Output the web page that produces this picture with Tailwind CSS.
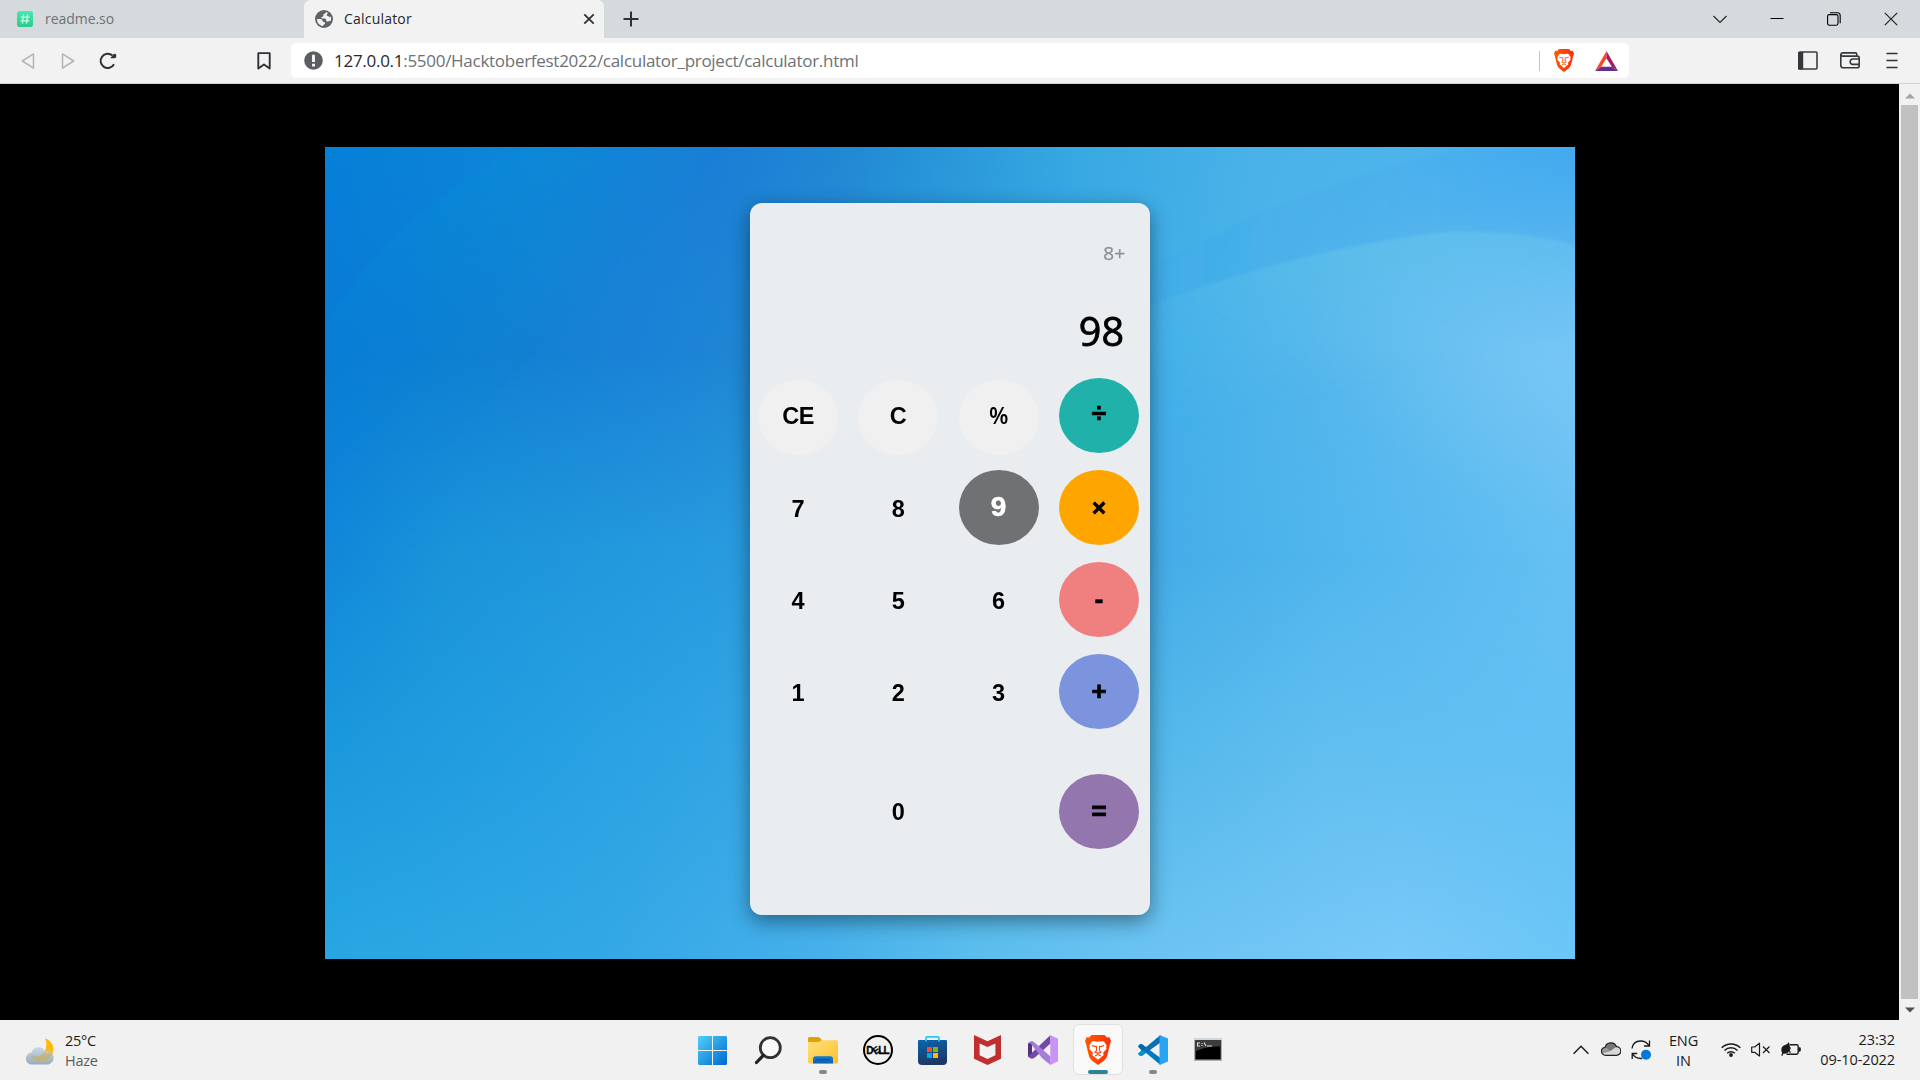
<!DOCTYPE html>
<html lang="en">
<head>
<meta charset="utf-8">
<title>Calculator</title>
<script src="https://cdn.jsdelivr.net/npm/@tailwindcss/browser@4"></script>
</head>
<body class="w-[1920px] h-[1080px] overflow-hidden flex flex-col bg-black font-['Open_Sans','Noto_Sans',sans-serif]">

<!-- Tab strip -->
<header class="h-[38px] shrink-0 bg-[#d5dadd] flex text-[14px]">
  <div class="w-[304px] flex items-center pl-[17px]">
    <svg class="w-4 h-4" viewBox="0 0 16 16"><defs><linearGradient id="rd" x2="0" y2="1"><stop stop-color="#48e8b0"/><stop offset="1" stop-color="#2fc98d"/></linearGradient></defs><rect width="16" height="16" rx="2.5" fill="url(#rd)"/><path d="M6.6 3.4 5.4 12.6M10.6 3.4 9.4 12.6M3.8 6.2h8.8M3.4 9.8h8.8" stroke="#b8ffe6" stroke-width="1.3" fill="none"/></svg>
    <span class="ml-3 pb-0.5 text-[#6e7173] tracking-[-0.05px]">readme.so</span>
  </div>
  <div class="w-[300px] rounded-t-[6px] bg-[#f2f2f2] flex items-center pl-[11px] pr-[9px]">
    <svg class="w-[18px] h-[18px]" viewBox="0 0 18 18"><circle cx="9" cy="9" r="9" fill="#5f6368"/><path d="M11 1.800c-.2 1.500-1.300 1.700-2.100 2.300-.9.800 0 1.700-.9 2.300-.8.500-1.700.2-1.700 1.200 0 1 1.200 1 2.600 1 1.600 0 2.200.5 2.300 1.800.1 1.400 1.300 1.200 2.100.9 1.100-.4 2 .200 2.600-.8.400-1.300.3-2.600-.1-3.900-.9.600-1.900.3-2.400-.4-.5-.6-1.700-.2-1.800-1 0-.9 1.200-1.300 1.100-2.300zM1.900 9c0 3.500 2.600 6.700 6 7.100.6-1.400.8-1.500 1.900-2.200.8-.7-.1-1.600-.9-1.800-1-.2-1.300-.5-1.500-1.500C7.200 9.300 5.500 9.200 4.600 9.100 3.600 9 2.700 9.300 1.900 9z" fill="#f2f2f2"/></svg>
    <span class="ml-[11px] pb-0.5 text-[#25282b] tracking-[0.2px] flex-1">Calculator</span>
    <svg class="w-3 h-3" viewBox="0 0 12 12"><path d="M1.300 1.300 10.700 10.700M10.700 1.300 1.300 10.700" stroke="#2e3135" stroke-width="1.800"/></svg>
  </div>
  <div class="flex-1 flex items-center pl-[19px]">
    <svg class="w-4 h-4" viewBox="0 0 16 16"><path d="M8 .5v15M.5 8h15" stroke="#2e3135" stroke-width="2"/></svg>
  </div>
  <div class="w-[230px] flex items-center justify-between pl-[23px] pr-[22px]">
    <svg class="w-[14px] h-[14px]" viewBox="0 0 14 14"><path d="M.5 4 7 10.500 13.500 4" fill="none" stroke="#222" stroke-width="1.100"/></svg>
    <svg class="w-[14px] h-[14px]" viewBox="0 0 14 14"><path d="M.5 6.500h13" stroke="#000" stroke-width="1"/></svg>
    <svg class="w-[14px] h-[14px]" viewBox="0 0 14 14" fill="none" stroke="#000" stroke-width="1.100"><rect x=".6" y="2.600" width="10.400" height="10.600" rx="1.600"/><path d="M3 .7h7.500c1.800 0 2.700 1.200 2.700 3v7.500"/></svg>
    <svg class="w-[14px] h-[14px]" viewBox="0 0 14 14"><path d="M.8.800 13.200 13.200M13.200.8.800 13.200" stroke="#222" stroke-width="1.200"/></svg>
  </div>
</header>

<!-- Address toolbar -->
<nav class="h-[46px] shrink-0 bg-[#f2f2f2] border-b border-[#d2d2d2] flex items-center">
  <div class="w-[291px] flex items-center pl-[21px] pr-5">
    <svg class="w-[14px] h-[18px]" viewBox="0 0 14 18"><path d="M12.500 1.800v14.400L1.300 9z" fill="none" stroke="#b4b5b6" stroke-width="1.500" stroke-linejoin="round"/></svg>
    <svg class="w-[14px] h-[18px] ml-[26px]" viewBox="0 0 14 18"><path d="M1.500 1.800v14.400L12.700 9z" fill="none" stroke="#b4b5b6" stroke-width="1.500" stroke-linejoin="round"/></svg>
    <svg class="w-[18px] h-[18px] ml-6" viewBox="0 0 18 18"><path d="M15 12.200A7.100 7.100 0 1 1 13.500 3.600" fill="none" stroke="#2e3135" stroke-width="2"/><path d="M11.200 6.300h4.300c1.100 0 1.700-.6 1.700-1.700V3.200c0-1.300-1.400-2-2.400-1.200z" fill="#2e3135"/></svg>
    <div class="flex-1"></div>
    <svg class="w-[14px] h-[18px]" viewBox="0 0 14 18"><path d="M1.300 1.100h11.400v15.500L7 12.400l-5.700 4.200z" fill="none" stroke="#2e3135" stroke-width="1.900" stroke-linejoin="round"/></svg>
  </div>
  <div class="w-[1338px] h-[35px] rounded-[5px] bg-white flex items-center pl-[13px] pr-[11px]">
    <svg class="w-[19px] h-[19px]" viewBox="0 0 19 19"><circle cx="9.500" cy="9.500" r="9.300" fill="#5a5e63"/><path d="M8.100 3.700h2.800v7.200H8.100zM8.100 12.700h2.800v2.700H8.100z" fill="#fff"/></svg>
    <div class="ml-[11px] text-[17px] tracking-[-0.28px] text-[#6d7175] whitespace-nowrap flex-1"><span class="text-[#26292c]">127.0.0.1</span>:5500/Hacktoberfest2022/calculator_project/calculator.html</div>
    <div class="w-px h-5 bg-[#c2c4c6]"></div>
    <svg class="w-5 h-[23px] ml-[14px]" viewBox="0 0 26 30"><use href="#lion"/></svg>
    <svg class="w-[23px] h-5 ml-[21px]" viewBox="0 0 23 20"><path d="M11.500 0 0 20l6.200-4.200 5.300-8.600z" fill="#ff4724"/><path d="M11.500 0 23 20l-6.200-4.200-5.300-8.600z" fill="#9e1f63"/><path d="M0 20h23l-6.200-4.200H6.200z" fill="#662d91"/></svg>
  </div>
  <div class="flex-1 flex items-center pl-[169px]">
    <svg class="w-5 h-[19px]" viewBox="0 0 20 19"><rect x="1" y="1" width="18" height="17" rx="1" fill="none" stroke="#3b3e43" stroke-width="1.600"/><path d="M0 1h5.200v17.500H0z" fill="#34373c"/></svg>
    <svg class="w-5 h-[17px] ml-[22px]" viewBox="0 0 20 17"><path d="M2.500 4.100h14.700a2 2 0 0 1 2 2v7.700a2 2 0 0 1-2 2H3a2.200 2.200 0 0 1-2.200-2.200V2.800C.8 1.600 1.700.9 2.800.9h12.400c1 0 1.600.7 1.600 1.600v1.600M1 2.500c0 1 .7 1.600 1.500 1.600M19.200 7h-6.300a2.700 2.700 0 0 0 0 5.400h6.300" fill="none" stroke="#34373c" stroke-width="1.600"/></svg>
    <svg class="w-3 h-[17px] ml-[26px]" viewBox="0 0 12 17"><path d="M.5 1.500h11M.5 8.500h11M.5 15.500h11" stroke="#2e3135" stroke-width="1.700"/></svg>
  </div>
</nav>

<!-- Page viewport -->
<div class="h-[936px] shrink-0 flex">
  <main class="w-[1899px] bg-black pt-[63px] pl-[325px]">
    <div class="relative w-[1250px] h-[812px] overflow-hidden pt-[56px] pl-[425px]">
      <!-- Wallpaper: five horizontal colour bands that fade into each other -->
      <svg class="absolute inset-0 w-[1250px] h-[812px]" viewBox="0 0 1250 812">
        <defs>
          <linearGradient id="g0"><stop stop-color="#0680d9"/><stop offset=".17" stop-color="#0f86d8"/><stop offset=".31" stop-color="#1a7ed6"/><stop offset=".42" stop-color="#2289d4"/><stop offset=".5" stop-color="#2a98da"/><stop offset=".6" stop-color="#38a9e2"/><stop offset=".75" stop-color="#4ab2e9"/><stop offset=".87" stop-color="#4db4ec"/><stop offset="1" stop-color="#46aef0"/></linearGradient>
          <linearGradient id="g1"><stop stop-color="#0a7ad5"/><stop offset=".13" stop-color="#1180d2"/><stop offset=".26" stop-color="#1b82d6"/><stop offset=".34" stop-color="#2087d4"/><stop offset=".5" stop-color="#2d9bdc"/><stop offset=".68" stop-color="#43b0e9"/><stop offset=".8" stop-color="#55b7ec"/><stop offset="1" stop-color="#6fc3f3"/></linearGradient>
          <linearGradient id="g2"><stop stop-color="#1088da"/><stop offset=".1" stop-color="#1b94da"/><stop offset=".34" stop-color="#299cdf"/><stop offset=".68" stop-color="#46ade8"/><stop offset=".82" stop-color="#52b7ee"/><stop offset="1" stop-color="#66c0f3"/></linearGradient>
          <linearGradient id="g3"><stop stop-color="#1c99dc"/><stop offset=".15" stop-color="#249fe1"/><stop offset=".34" stop-color="#34a6e5"/><stop offset=".66" stop-color="#54b8ea"/><stop offset=".8" stop-color="#62bff0"/><stop offset="1" stop-color="#62c0f4"/></linearGradient>
          <linearGradient id="g4"><stop stop-color="#28a6e2"/><stop offset=".22" stop-color="#34a8e6"/><stop offset=".4" stop-color="#47b0ea"/><stop offset=".52" stop-color="#5cbeed"/><stop offset=".66" stop-color="#6cc3f2"/><stop offset=".86" stop-color="#78c9f8"/><stop offset="1" stop-color="#6bc6f6"/></linearGradient>
          <linearGradient id="f1" x2="0" y2="1"><stop offset="0" stop-color="#000"/><stop offset=".25" stop-color="#fff"/></linearGradient>
          <linearGradient id="f2" x2="0" y2="1"><stop offset=".25" stop-color="#000"/><stop offset=".5" stop-color="#fff"/></linearGradient>
          <linearGradient id="f3" x2="0" y2="1"><stop offset=".5" stop-color="#000"/><stop offset=".75" stop-color="#fff"/></linearGradient>
          <linearGradient id="f4" x2="0" y2="1"><stop offset=".75" stop-color="#000"/><stop offset="1" stop-color="#fff"/></linearGradient>
          <mask id="m1"><rect width="1250" height="812" fill="url(#f1)"/></mask>
          <mask id="m2"><rect width="1250" height="812" fill="url(#f2)"/></mask>
          <mask id="m3"><rect width="1250" height="812" fill="url(#f3)"/></mask>
          <mask id="m4"><rect width="1250" height="812" fill="url(#f4)"/></mask>
          <linearGradient id="arcA" x1="850" y1="0" x2="1150" y2="0" gradientUnits="userSpaceOnUse"><stop stop-color="#2f8fee" stop-opacity=".05"/><stop offset="1" stop-color="#2f96ee" stop-opacity=".12"/></linearGradient>
          <linearGradient id="arcB" x1="1000" y1="85" x2="1040" y2="240" gradientUnits="userSpaceOnUse"><stop stop-color="#74d0e6" stop-opacity=".32"/><stop offset="1" stop-color="#74d0f0" stop-opacity="0"/></linearGradient>
          <linearGradient id="arcM" x1="830" y1="0" x2="1020" y2="0" gradientUnits="userSpaceOnUse"><stop stop-color="#fff" stop-opacity=".3"/><stop offset="1" stop-color="#fff"/></linearGradient>
          <mask id="mB"><rect width="1250" height="812" fill="url(#arcM)"/></mask>
          <linearGradient id="arcC" x1="70" y1="60" x2="220" y2="200" gradientUnits="userSpaceOnUse"><stop stop-color="#1496d4" stop-opacity=".2"/><stop offset="1" stop-color="#1496d4" stop-opacity="0"/></linearGradient>
          <radialGradient id="glow"><stop stop-color="#82cdf8" stop-opacity=".4"/><stop offset="1" stop-color="#82cdf8" stop-opacity="0"/></radialGradient>
          <filter id="b1"><feGaussianBlur stdDeviation="1.500"/></filter>
        </defs>
        <rect width="1250" height="812" fill="url(#g0)"/>
        <rect width="1250" height="812" fill="url(#g1)" mask="url(#m1)"/>
        <rect width="1250" height="812" fill="url(#g2)" mask="url(#m2)"/>
        <rect width="1250" height="812" fill="url(#g3)" mask="url(#m3)"/>
        <rect width="1250" height="812" fill="url(#g4)" mask="url(#m4)"/>
        <g filter="url(#b1)">
          <path d="M800 140Q960 38 1150 0H1260V100Q1190 82 1120 86 960 105 800 168z" fill="url(#arcA)"/>
          <path d="M800 168Q960 105 1110 86 1190 80 1260 101V330H800z" fill="url(#arcB)" mask="url(#mB)"/>
          <path d="M-5 185Q70 60 205-5H420V300H-5z" fill="url(#arcC)"/>
        </g>
        <ellipse cx="1230" cy="225" rx="260" ry="150" fill="url(#glow)" transform="rotate(20 1230 225)"/>
      </svg>

      <!-- Calculator -->
      <section class="relative w-[400px] h-[712px] rounded-[12px] bg-[#e9edf0] shadow-[0_6px_20px_rgba(0,0,0,0.42)] flex flex-col">
        <div class="h-[100px] pt-[36px] pr-[25px] text-right text-[19px] leading-[28px] text-[#8f9193] [-webkit-text-stroke:0.3px_#8f9193]">8+</div>
        <div class="h-[75px] pr-[26px] text-right text-[39.500px] leading-[57px] text-black [-webkit-text-stroke:0.8px_black]">98</div>
        <div class="grid grid-cols-[80px_80px_80px_80px] gap-x-[20.330px] gap-y-[17px] pl-[8px] font-['Liberation_Sans',Arial,sans-serif] font-bold text-[23.500px] text-black">
          <button class="h-[75px] mt-[2px] -mb-[2px] rounded-[50%] bg-[#f0f0f0] pb-px tracking-[-0.5px]">CE</button>
          <button class="h-[75px] mt-[2px] -mb-[2px] rounded-[50%] bg-[#f0f0f0] pb-px">C</button>
          <button class="h-[75px] mt-[2px] -mb-[2px] rounded-[50%] bg-[#f0f0f0] font-['Open_Sans',sans-serif] font-semibold text-[22.500px] pb-[3px]">%</button>
          <button class="h-[75px] rounded-[50%] bg-[#20b2aa] pb-1 text-[27px] [-webkit-text-stroke:0.6px_black]">÷</button>

          <button class="h-[75px] pt-1">7</button>
          <button class="h-[75px] pt-1">8</button>
          <button class="h-[75px] rounded-[50%] bg-[#707172] text-white text-[28px] pb-0.5 [-webkit-text-stroke:0.5px_white]">9</button>
          <button class="h-[75px] rounded-[50%] bg-[#ffa500] text-[24px] [-webkit-text-stroke:0.8px_black]">×</button>

          <button class="h-[75px] pt-1">4</button>
          <button class="h-[75px] pt-1">5</button>
          <button class="h-[75px] pt-1">6</button>
          <button class="h-[75px] rounded-[50%] bg-[#f08080] text-[27px] pt-0.5 [-webkit-text-stroke:0.5px_black]">-</button>

          <button class="h-[75px] pt-1">1</button>
          <button class="h-[75px] pt-1">2</button>
          <button class="h-[75px] pt-1">3</button>
          <button class="h-[75px] rounded-[50%] bg-[#7c93de] text-[26px] [-webkit-text-stroke:0.7px_black]">+</button>

          <button class="h-[75px] mt-7 pt-0.5 col-start-2">0</button>
          <button class="h-[75px] mt-7 col-start-4 rounded-[50%] bg-[#9476ae] text-[26px] [-webkit-text-stroke:0.900px_black]">=</button>
        </div>
      </section>
    </div>
  </main>
  <aside class="w-[21px] bg-[#f1f1f1] flex flex-col items-center">
    <div class="h-[21px] flex items-center"><svg class="w-[10px] h-[6px] mt-[2px]" viewBox="0 0 10 6"><path d="M0 5.500 5 .5l5 5z" fill="#a3a3a3"/></svg></div>
    <div class="w-[17px] h-[894px] bg-[#c1c1c1]"></div>
    <div class="h-[21px] flex items-center"><svg class="w-[10px] h-[6px]" viewBox="0 0 10 6"><path d="M0 .5 5 5.500l5-5z" fill="#505050"/></svg></div>
  </aside>
</div>

<!-- Taskbar -->
<footer class="h-[60px] shrink-0 bg-[#f1f1f1] flex">
  <div class="w-[685px] flex items-center pl-[26px] text-[14.500px] leading-[20px]">
    <svg class="w-[29px] h-[27px] mt-[3px]" viewBox="0 0 29 27"><defs><linearGradient id="cl" x2="0" y2="1"><stop stop-color="#c3d7e8"/><stop offset="1" stop-color="#93a7b8"/></linearGradient></defs><path d="M19 .5c4.700 1 8.400 5.300 8.400 10.500 0 6.800-5 11.700-11 11.700-5 0-9.600-2.700-11.400-6.500 5 2 9.800 1.600 12.800-2.200 3.100-4 3.300-8.600 1.200-13.500z" fill="#fcbb12"/><path d="M6 26.500a6 6 0 0 1-.4-12A7.200 7.200 0 0 1 19 13.300a6.700 6.700 0 1 1 3.600 13.200z" fill="url(#cl)" fill-opacity=".92"/><path d="M4.500 17.500c3.500 2 10 1.500 13-2.500 3 .5 5.500.9 8.500.5-1.500 5-5.500 8-10.200 8-4.800 0-9-2-11.300-6z" fill="#c8b260" fill-opacity=".65"/></svg>
    <div class="ml-[10px] tracking-[-0.3px] pt-px"><div class="text-[#1b1b1b]">25°C</div><div class="text-[#5c5c5c]">Haze</div></div>
  </div>

  <div class="w-[550px] grid grid-cols-10 justify-items-center">
    <div class="pt-4"><svg class="w-[29px] h-[29px]" viewBox="0 0 29 29"><defs><linearGradient id="wn" x1="0" y1="0" x2="29" y2="29" gradientUnits="userSpaceOnUse"><stop stop-color="#4fd0fc"/><stop offset="1" stop-color="#0068cf"/></linearGradient></defs><path d="M1 0h13v14H0V1zM15 0h13l1 1v13H15zM0 15h14v14H1l-1-1zM15 15h14v13l-1 1H15z" fill="url(#wn)"/></svg></div>
    <div class="pt-4"><svg class="w-7 h-[29px]" viewBox="0 0 28 29"><circle cx="16.300" cy="11.700" r="10" fill="#f8f8f8" stroke="#333" stroke-width="2.800"/><path d="M9.300 19.300 2.500 26.500" stroke="#222" stroke-width="3.200" stroke-linecap="round"/></svg></div>
    <div class="pt-[17px] flex flex-col items-center"><svg class="w-[30px] h-[27px]" viewBox="0 0 30 27"><defs><linearGradient id="fo" x2="1" y2="1"><stop stop-color="#ffe07a"/><stop offset="1" stop-color="#fcc02e"/></linearGradient><linearGradient id="fb" x2="0" y2="1"><stop stop-color="#0f7bd4"/><stop offset="1" stop-color="#1660ad"/></linearGradient></defs><path d="M0 1.500C0 .6.600 0 1.500 0h8c1.200 0 2.200.5 3 1.500L14.500 4H12v8H0z" fill="#e2a007"/><path d="M0 5h10.500l3-1.700H28.500c.9 0 1.500.6 1.500 1.500V25c0 .9-.6 1.500-1.500 1.500h-27C.6 26.500 0 25.900 0 25z" fill="url(#fo)"/><path d="M5 26.500V21.700c0-1.500 1-2.500 2.500-2.500h15c1.500 0 2.500 1 2.500 2.500v4.800z" fill="url(#fb)"/><path d="M8.500 22.800h13" stroke="#064a8c"/></svg><div class="w-2 h-1 mt-[6px] rounded-full bg-[#878787]"></div></div>
    <div class="pt-[15px]"><div class="w-[30px] h-[30px] rounded-full border-2 border-black flex items-center justify-center font-['Liberation_Sans',Arial,sans-serif] font-bold text-[10px] tracking-[-0.900px] [-webkit-text-stroke:0.3px_black]"><span>D</span><span class="-rotate-[35deg]">E</span><span>LL</span></div></div>
    <div class="pt-4"><svg class="w-[29px] h-[29px]" viewBox="0 0 29 29"><defs><linearGradient id="st" x2=".3" y2="1"><stop stop-color="#0866b2"/><stop offset="1" stop-color="#1e3864"/></linearGradient></defs><path d="M0 5.200C0 4.500.5 4 1.200 4h26.600c.7 0 1.200.5 1.200 1.200V25a4 4 0 0 1-4 4H4a4 4 0 0 1-4-4z" fill="url(#st)"/><path d="M8 5.500V2.200C8 1.300 8.500.9 9.300.9h10.400c.8 0 1.300.4 1.300 1.300v3.300" fill="none" stroke="#2bc4f4" stroke-width="1.700"/><path d="M9 11h5v5H9z" fill="#f25022"/><path d="M15 11h5v5h-5z" fill="#7fba00"/><path d="M9 17h5v5H9z" fill="#00a4ef"/><path d="M15 17h5v5h-5z" fill="#ffb900"/></svg></div>
    <div class="pt-[15px]"><svg class="w-[27px] h-[30px]" viewBox="0 0 27 30"><path d="M0 0 13.500 6.300 27 0v23.800L13.500 30 0 23.800zM5.600 8.400v11.800l7.900 3.700 7.900-3.700V8.400L13.500 12z" fill="#c02e2d" fill-rule="evenodd"/></svg></div>
    <div class="pt-[15px]"><svg class="w-[30px] h-[30px]" viewBox="0 0 30 30"><path d="M0 8.500 4.500 6.300V23.700L0 21.500z" fill="#52307c"/><path d="M4 10.500 8.500 15 4 19.500z" fill="#f1f1f1"/><path d="M0 21.500 22.500 0V8.500L8 21.500C6 23.500 4 24 2.500 23.300z" fill="#7649a8"/><path d="M0 8.500C1 6.700 3.500 5.500 6 7L22.500 21.500V30L14 23 2.500 8.300z" fill="#a77bd9"/><path d="M22.300 0 30 3.800v22.400L22.300 30z" fill="#c993f5"/></svg></div>
    <div class="pt-[5px]"><div class="w-12 h-[49px] rounded-[5px] bg-[#f9f9f9] shadow-[0_0_1px_1px_rgba(0,0,0,0.07)] flex flex-col items-center pt-[10px]"><svg class="w-[26px] h-[30px]" viewBox="0 0 26 30"><defs><linearGradient id="lo" x1="0" y1="0" x2="26" y2="0" gradientUnits="userSpaceOnUse"><stop stop-color="#ff5a00"/><stop offset="1" stop-color="#ff2d0a"/></linearGradient><g id="lion"><path d="M6.500 0h13L22 2.500l2.500-.3L26 6l-1 3-3.200 13-2.300 3.200L13 30l-6.500-4.800L4.200 22 1 9 0 6l1.500-3.800 2.500.3z" fill="url(#lo)"/><path d="M9 6.200 13 6.800 17 6.200l2 .2 2.700 4-.6 1.800.4 1.800-3.400 3.800.6 2.200-1.800 1.500L13 24.700 9.100 21.500l-1.800-1.500.6-2.200L4.500 14l.4-1.800-.6-1.800 2.700-4z" fill="#fff"/><path d="M6.800 10.600 11.300 11.800M19.200 10.600 14.700 11.800M11.500 11v4.700L10 17l3 1.300L16 17l-1.500-1.300V11M10 21l3-1.500 3 1.500" fill="none" stroke="#ff440c" stroke-width="1.100"/></g></defs><use href="#lion"/></svg><div class="w-5 h-1 mt-[5px] rounded-full bg-[#2a8594]"></div></div></div>
    <div class="pt-[15px] flex flex-col items-center"><svg class="w-[30px] h-[30px]" viewBox="0 0 30 30"><path d="M0 11.300 2 9.300 4 9.300 22.500 23v7z" fill="#0079c4"/><path d="M0 18.700 22.500 0V7.500L4 20.700H2z" fill="#0a6fb5"/><path d="M0 18.700 4.300 14.800 8 17.800 4 20.700H2z" fill="#0091d8"/><path d="M4 9.300 8 12.300 4 16 0 11.500 2 9.300z" fill="#0069ad"/><path d="M21.500 0 30 3.600v22.800L21.500 30z" fill="#27a4f2"/></svg><div class="w-2 h-1 mt-[5px] rounded-full bg-[#878787]"></div></div>
    <div class="pt-[18px]"><svg class="w-7 h-[23px]" viewBox="0 0 28 23"><path d="M0 0h28v23H0z" fill="#a9b0b5"/><path d="M0 0h28v2H0z" fill="#cfd6dc"/><path d="M1.300 2.300h25.400v19.200H1.300z" fill="#000"/><path d="M1.300 2.300h25.400v6C16 8.500 7 10 1.300 14z" fill="#3c3c3c"/><path d="M6 5H3.500v3H6M8 5v1M8 7v1M10 4.500l2 3.500M13 8h5" stroke="#ddd" stroke-width="1.100" fill="none"/></svg></div>
  </div>

  <div class="flex-1 flex items-start justify-end pr-[25px] text-[14.500px] leading-[20px] text-[#1b1b1b]">
    <svg class="w-4 h-[10px] mt-[25px]" viewBox="0 0 16 10"><path d="M.6 8.800 8 1.200l7.400 7.600" fill="none" stroke="#1b1b1b" stroke-width="1.400"/></svg>
    <svg class="w-5 h-[14px] mt-[22px] ml-3" viewBox="0 0 20 14"><path d="M4.800 13.300a4 4 0 0 1-.7-8A6 6 0 0 1 15.500 4.700a4.300 4.300 0 0 1 0 8.600z" fill="#d8d8d8"/><path d="M4.100 5.300A6 6 0 0 1 15.500 4.700L9 9.200z" fill="#777"/><path d="M4.100 5.300A4 4 0 0 0 1.500 11.500L9 9.200z" fill="#999"/><path d="M4.800 13.300a4 4 0 0 1-.7-8A6 6 0 0 1 15.500 4.700a4.300 4.300 0 0 1 0 8.600z" fill="none" stroke="#222" stroke-width="1.200"/></svg>
    <svg class="w-5 h-[21px] mt-[19px] ml-[10px]" viewBox="0 0 20 21"><path d="M1 9.500C1.700 5 5 2 9.500 2c4 0 7 2 8.700 4.800M18.500 1.500V7H13M11 19.500C6.500 19.700 3 18 1.500 14.500M1.200 20v-5.500h5" fill="none" stroke="#1b1b1b" stroke-width="1.300"/><circle cx="15" cy="15.800" r="5" fill="#0078d7"/></svg>
    <div class="w-[31px] ml-[17px] mt-[11px] text-center tracking-[-0.1px]">ENG<br>IN</div>
    <svg class="w-5 h-[15px] mt-[22px] ml-[22px]" viewBox="0 0 20 15"><path d="M.7 5.800a13 13 0 0 1 18.600 0M3.500 8.500a9.200 9.200 0 0 1 13 0M6.200 11.200a5.400 5.400 0 0 1 7.600 0" fill="none" stroke="#1b1b1b" stroke-width="1.500"/><circle cx="10" cy="13" r="1.900" fill="#1b1b1b"/></svg>
    <svg class="w-[19px] h-[15px] mt-[22px] ml-[10px]" viewBox="0 0 19 15"><path d="M.7 5v5.300h3L8.500 14V1.200L3.700 5z" fill="none" stroke="#1b1b1b" stroke-width="1.200" stroke-linejoin="round"/><path d="m12 4.500 6.500 6.500M18.500 4.500 12 11" stroke="#1b1b1b" stroke-width="1.200"/></svg>
    <svg class="w-5 h-[15px] mt-[22px] ml-[11px]" viewBox="0 0 20 15"><path d="M9 2.700h6.500c1.100 0 1.700.7 1.700 1.700v6.200c0 1-.6 1.700-1.700 1.700H5.500" fill="none" stroke="#1b1b1b" stroke-width="1.400"/><path d="M17.500 5.300h1c.8 0 1.300.5 1.300 1.200v2c0 .7-.5 1.200-1.300 1.200h-1zM7.800 0c2 4.500 1.500 9.500-1.800 11.200-1.500.7-3 .3-3.800.5L1.500 14 .3 13.500l.8-2.600C-.6 7.500.5 4 4 3 6 2.400 7 1.500 7.800 0z" fill="#1b1b1b"/><path d="M9.500 5.500 7.800 10h2.400" fill="none" stroke="#1b1b1b"/></svg>
    <div class="w-[84px] mt-[10px] ml-[10px] text-right whitespace-nowrap tracking-[-0.1px]">23:32<br>09-10-2022</div>
  </div>
</footer>
</body>
</html>
